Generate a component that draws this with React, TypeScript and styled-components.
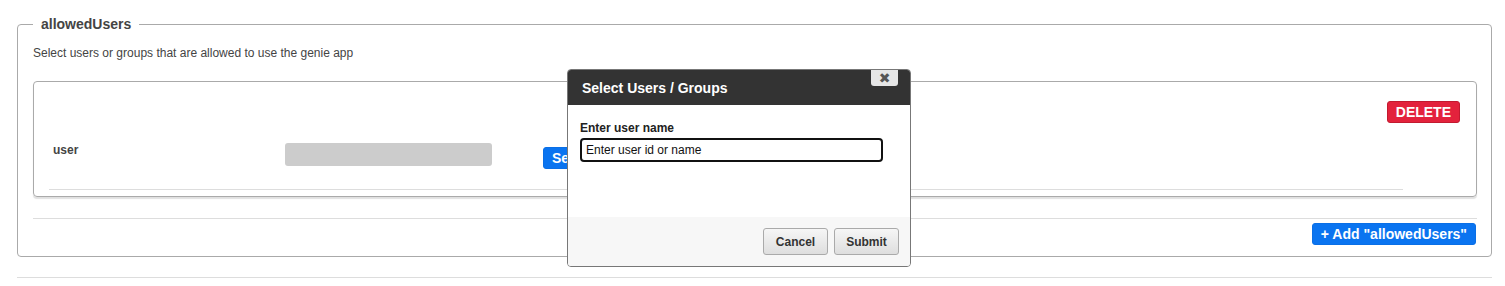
import React from 'react';
import styled, { createGlobalStyle } from 'styled-components';

const GlobalStyle = createGlobalStyle`
  body {
    margin: 0;
    background: #fff;
    font-family: "Liberation Sans", Arial, sans-serif;
    color: #444;
  }
`;

const Page = styled.div`
  position: relative;
  width: 1475px;
  padding: 16px 0 0 17px;
`;

const FieldSet = styled.fieldset`
  margin: 0;
  padding: 0 14px 11px 15px;
  border: 1px solid #aaa;
  border-radius: 4px;
  min-inline-size: auto;
`;

const Legend = styled.legend`
  margin-left: 0;
  padding: 0 8px;
  font-size: 14px;
  line-height: 16px;
  font-weight: bold;
  color: #444;
`;

const Description = styled.p`
  margin: 14px 0 21px;
  font-size: 12px;
  line-height: 14px;
  color: #444;
`;

const Card = styled.div`
  border: 1px solid #aaa;
  border-radius: 4px;
  padding: 19px 16px 6px 15px;
  box-shadow: 0 2px 1px rgba(0, 0, 0, 0.12);
`;

const CardHeader = styled.div`
  display: flex;
  justify-content: flex-end;
`;

const FieldRow = styled.div`
  display: flex;
  align-items: flex-start;
  margin-top: 20px;
  height: 26px;
`;

const FieldLabel = styled.div`
  width: 236px;
  padding-left: 4px;
  box-sizing: border-box;
  font-size: 12px;
  line-height: 14px;
  font-weight: bold;
  color: #444;
`;

const ValueBar = styled.div`
  width: 207px;
  height: 23px;
  background: #ccc;
  border-radius: 3px;
`;

const Button = styled.button<{ $tone: 'blue' | 'red' }>`
  border: 1px solid ${p => (p.$tone === 'red' ? '#c21a30' : '#0a6fe6')};
  background: ${p => (p.$tone === 'red' ? '#e3223c' : '#0a74f0')};
  color: #fff;
  font-family: "Liberation Sans", Arial, sans-serif;
  font-weight: bold;
  font-size: 14px;
  line-height: 18px;
  height: 22px;
  padding: 0 8px;
  border-radius: 3px;
  cursor: pointer;
`;

const SelectButton = styled(Button)`
  margin-left: 51px;
  margin-top: 4px;
`;

const RowDivider = styled.hr`
  margin: 20px 57px 0 0;
  border: 0;
  border-top: 1px solid #ddd;
`;

const Divider = styled.hr`
  margin: 21px 0 4px;
  border: 0;
  border-top: 1px solid #ddd;
`;

const Footer = styled.div`
  display: flex;
  justify-content: flex-end;
  padding-right: 1px;
`;

const PageRule = styled.hr`
  margin: 20px 0 0;
  border: 0;
  border-top: 1px solid #ddd;
`;

const Modal = styled.div`
  position: absolute;
  left: 567px;
  top: 69px;
  width: 342px;
  height: 196px;
  border: 1px solid #777;
  border-radius: 4px;
  background: #fff;
  display: flex;
  flex-direction: column;
  overflow: hidden;
`;

const ModalHeader = styled.div`
  position: relative;
  height: 35px;
  background: #333;
  display: flex;
  align-items: center;
  padding: 0 14px;
  box-sizing: border-box;
  color: #fff;
  font-size: 14px;
  font-weight: bold;
`;

const CloseButton = styled.button`
  position: absolute;
  right: 12px;
  top: 0;
  width: 27px;
  height: 16px;
  padding: 0;
  border: 0;
  border-radius: 0 0 3px 3px;
  background: #e6e6e6;
  color: #555;
  font-size: 14px;
  font-weight: bold;
  line-height: 16px;
  font-family: "DejaVu Sans", sans-serif;
  cursor: pointer;
`;

const ModalBody = styled.div`
  flex: 1;
  padding: 16px 12px 0;
`;

const InputLabel = styled.div`
  font-size: 12px;
  line-height: 14px;
  font-weight: bold;
  color: #222;
  margin-bottom: 3px;
`;

const TextInput = styled.input`
  display: block;
  width: 303px;
  height: 24px;
  box-sizing: border-box;
  border: 2px solid #111;
  border-radius: 4px;
  padding: 0 4px;
  font-family: "Liberation Sans", Arial, sans-serif;
  font-size: 12px;
  color: #111;
  outline: none;
`;

const ModalFooter = styled.div`
  height: 49px;
  background: #f7f7f7;
  display: flex;
  justify-content: flex-end;
  align-items: flex-start;
  gap: 6px;
  padding: 11px 11px 0;
  box-sizing: border-box;
`;

const DialogButton = styled.button`
  width: 65px;
  height: 27px;
  border: 1px solid #aaa;
  border-radius: 3px;
  background: linear-gradient(#f6f6f6, #dedede);
  color: #333;
  font-family: "Liberation Sans", Arial, sans-serif;
  font-size: 12px;
  font-weight: bold;
  cursor: pointer;
`;

const App: React.FC = () => {
  return (
    <>
      <GlobalStyle />
      <Page>
        <FieldSet>
          <Legend>allowedUsers</Legend>
          <Description>Select users or groups that are allowed to use the genie app</Description>
          <Card>
            <CardHeader>
              <Button $tone="red">DELETE</Button>
            </CardHeader>
            <FieldRow>
              <FieldLabel>user</FieldLabel>
              <ValueBar />
              <SelectButton $tone="blue">Select</SelectButton>
            </FieldRow>
            <RowDivider />
          </Card>
          <Divider />
          <Footer>
            <Button $tone="blue">+ Add "allowedUsers"</Button>
          </Footer>
        </FieldSet>
        <PageRule />

        <Modal>
          <ModalHeader>
            Select Users / Groups
            <CloseButton>✖</CloseButton>
          </ModalHeader>
          <ModalBody>
            <InputLabel>Enter user name</InputLabel>
            <TextInput defaultValue="Enter user id or name" />
          </ModalBody>
          <ModalFooter>
            <DialogButton>Cancel</DialogButton>
            <DialogButton>Submit</DialogButton>
          </ModalFooter>
        </Modal>
      </Page>
    </>
  );
};

export default App;
